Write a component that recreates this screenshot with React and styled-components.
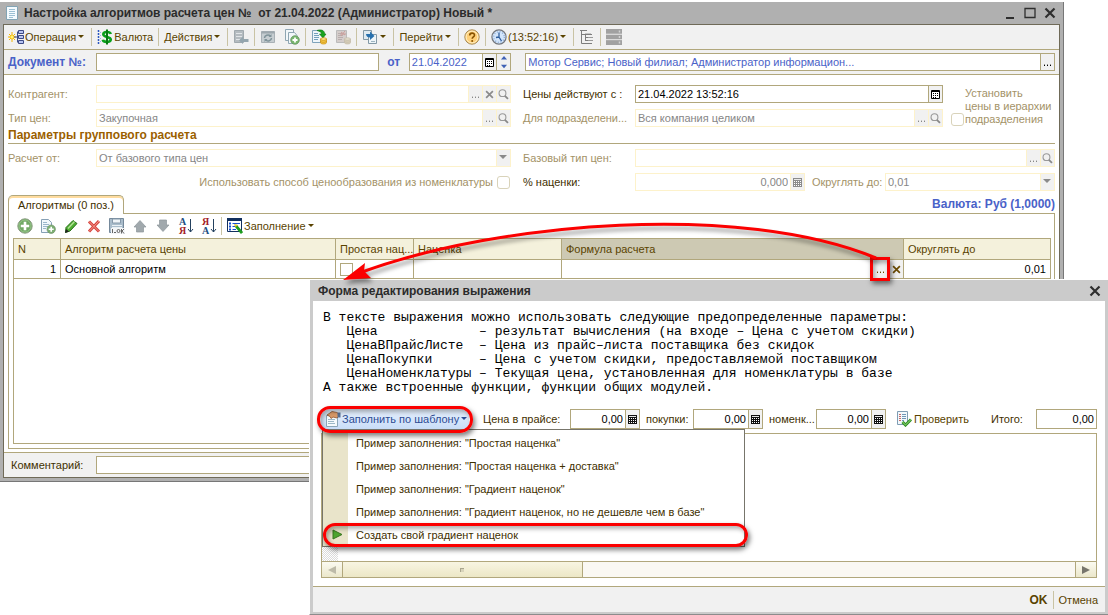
import React from 'react';
import styled, { createGlobalStyle, css } from 'styled-components';

const colors = {
    line: '#b1a77c',
    softLine: '#fdf2cb',
    panel: '#f1f1f1',
    text: '#3f3000',
    dim: '#a39267',
    gray: '#868686',
    blue: '#4a62c8',
    red: '#fb0000',
};

const GlobalStyle = createGlobalStyle`
    * {
        box-sizing: border-box;
    }
    body {
        margin: 0;
        background: #fff;
        color: ${colors.text};
        font-family: 'Liberation Sans', Arial, sans-serif;
        font-size: 11px;
        line-height: 14px;
    }
    button, input, select, textarea {
        font: inherit;
        color: inherit;
        margin: 0;
        padding: 0;
        border: 0;
        border-radius: 0;
        background: none;
        outline: none;
    }
    button {
        cursor: pointer;
    }
    svg {
        flex: none;
    }
`;

const Desktop = styled.div`
    position: relative;
    min-height: 100vh;
    overflow: hidden;
`;

/* ---------- windows ---------- */

const MainWindow = styled.main`
    margin: 2px 44px 0 0;
    padding: 0 3px 3px;
    background: #b0b0b0;
    border-right: 1px solid #777;
    border-bottom: 1px solid #777;
`;

const WindowTitle = styled.header`
    display: flex;
    align-items: center;
    gap: 4px;
    height: 22px;
    padding: 0 2px 0 1px;
`;

const TitleText = styled.h1`
    flex: 1;
    margin: 0;
    font-size: 12px;
    font-weight: bold;
    line-height: 14px;
    color: #2b2b2b;
    white-space: pre;
`;

const WindowButton = styled.button`
    display: flex;
    width: 16px;
    height: 16px;
    align-items: center;
    justify-content: center;
`;

const WindowBody = styled.div`
    border: 1px solid #6f6a58;
    background: #fff;
`;

const DialogWindow = styled.section`
    position: absolute;
    top: 279px;
    left: 309px;
    right: 0;
    padding: 0 3px 2px;
    background: #cbcbcb;
    border-top: 1px solid #fff;
    border-left: 1px solid #fff;
    border-bottom: 1px solid #8c8c8c;
`;

const DialogTitle = styled(WindowTitle)`
    height: 21px;
    padding: 0 2px 0 5px;
`;

const DialogHeading = styled(TitleText).attrs({ as: 'h2' })`
    font-size: 12px;
`;

const DialogBody = styled.div`
    padding: 10px 8px 8px;
    background: #fff;
`;

/* ---------- toolbars ---------- */

const Toolbar = styled.div`
    display: flex;
    align-items: center;
    height: 25px;
    background: ${colors.panel};
    border-bottom: 1px solid ${colors.line};
`;

const ToolButton = styled.button`
    display: flex;
    align-items: center;
    gap: 1px;
    height: 20px;
    padding: 0 4px;
    white-space: nowrap;
    color: #5a4300;
`;

const TableButton = styled(ToolButton)`
    padding: 0 3px 0 4px;
`;

const Separator = styled.span`
    width: 1px;
    height: 18px;
    margin: 0 1px;
    background: #c9c3a4;
`;

const Caret = styled.span`
    margin: 0 2px 2px 1px;
    border: ${({ $big }) => ($big ? 4 : 3)}px solid transparent;
    border-top-color: ${({ $color }) => $color || '#5a4300'};
    border-bottom: 0;
`;

/* ---------- fields ---------- */

const Label = styled.label`
    color: ${({ $tone }) => colors[$tone || 'text']};
    overflow: hidden;
    text-overflow: ellipsis;
    white-space: nowrap;
`;

const FieldBox = styled.div`
    display: flex;
    flex: ${({ $grow }) => $grow || 1};
    min-width: 0;
    height: 18px;
    background: #fff;
    border: 1px solid ${({ $off }) => ($off ? colors.softLine : colors.line)};
    color: ${({ $off }) => ($off ? colors.gray : '#000')};
`;

const fieldText = css`
    flex: 1;
    width: 100%;
    min-width: 0;
    padding: 0 2px;
    text-align: ${({ $right }) => ($right ? 'right' : 'left')};
    color: ${({ $blue }) => ($blue ? colors.blue : 'inherit')};
    text-overflow: ellipsis;
`;

const TextInput = styled.input`
    ${fieldText}
`;

const Select = styled.select`
    ${fieldText}
    appearance: none;
`;

const SelectArrow = styled.span`
    display: flex;
    width: 14px;
    align-items: center;
    justify-content: center;
    background: ${colors.panel};
    border-left: 1px solid ${colors.softLine};
    pointer-events: none;
`;

const FieldButton = styled.button`
    display: flex;
    flex: none;
    width: 14px;
    align-items: center;
    justify-content: center;
    background: ${colors.panel};
    border-left: 1px solid ${({ $off }) => ($off ? colors.softLine : colors.line)};
`;

const Check = styled.input.attrs({ type: 'checkbox' })`
    appearance: none;
    flex: none;
    width: 13px;
    height: 13px;
    background: #fff;
    border: 1px solid ${({ $off }) => ($off ? '#d9d3ba' : colors.line)};
    border-radius: ${({ $off }) => ($off ? 3 : 0)}px;
`;

/* ---------- main form ---------- */

const DocumentRow = styled.div`
    display: flex;
    align-items: center;
    height: 25px;
    padding: 0 4px;
    background: ${colors.panel};
    border-bottom: 1px solid ${colors.line};
`;

const StrongLabel = styled.label`
    flex: none;
    width: ${({ $wide }) => ($wide ? 88 : 30)}px;
    font-size: 12px;
    font-weight: bold;
    color: ${colors.blue};
    text-align: ${({ $wide }) => ($wide ? 'left' : 'center')};
`;

const DateGroup = styled.div`
    display: flex;
    flex: 103;
    min-width: 0;
    margin-right: 14px;
`;

const FormGrid = styled.div`
    display: grid;
    grid-template-columns: 88px minmax(0, 415fr) 124px minmax(0, 308fr) 112px;
    row-gap: 6px;
    align-items: center;
    padding: ${({ $top }) => $top}px 4px 0;
`;

const SideLabel = styled(Label)`
    padding-left: 12px;
`;

const WideCell = styled.div`
    display: flex;
    align-items: center;
    grid-column: span 2;
    min-width: 0;
`;

const HierarchyCheck = styled.label`
    display: flex;
    grid-column: 5;
    grid-row: 1 / span 2;
    align-items: flex-end;
    gap: 1px;
    padding-left: 8px;
    line-height: 13px;
    color: ${colors.dim};
`;

const HierarchyText = styled.span`
    white-space: pre;
`;

const PricingCheck = styled(WideCell).attrs({ as: 'label' })`
    justify-content: flex-end;
    gap: 4px;
    padding-right: 1px;
    color: ${colors.dim};
`;

const RoundLabel = styled(Label)`
    flex: none;
    width: 80px;
    padding-left: 7px;
`;

const SectionTitle = styled.h2`
    margin: 0 4px;
    height: 17px;
    font-size: 12px;
    line-height: 17px;
    color: #9b5f00;
    border-bottom: 1px solid ${colors.line};
`;

const TabStrip = styled.div`
    display: flex;
    justify-content: space-between;
    align-items: flex-end;
    height: 18px;
    margin: 4px 4px 0;
`;

const Tab = styled.button`
    position: relative;
    z-index: 1;
    height: 19px;
    margin-bottom: -1px;
    padding: 0 9px;
    background: #fff;
    border: 1px solid ${colors.line};
    border-bottom: 0;
    border-radius: 5px 5px 0 0;
    box-shadow: inset 0 2px 0 #ffdc9f;
`;

const Currency = styled.strong`
    align-self: center;
    font-size: 12px;
    color: ${colors.blue};
`;

const TabPanel = styled.div`
    margin: 0 4px 3px;
    padding: 0 3px 4px 4px;
    border: 1px solid ${colors.line};
`;

const TableToolbar = styled.div`
    display: flex;
    align-items: center;
    height: 24px;
`;

const TableFrame = styled.div`
    min-height: 206px;
    border: 1px solid ${colors.line};
`;

const Table = styled.table`
    width: 100%;
    table-layout: fixed;
    border-collapse: separate;
    border-spacing: 0;
`;

const Col = styled.col`
    width: ${({ $width }) => $width};
`;

const Th = styled.th`
    height: 21px;
    padding: 0 3px 0 4px;
    font-weight: normal;
    text-align: left;
    white-space: nowrap;
    color: #5a4300;
    background: ${({ $active }) => ($active ? '#cdc9b3' : '#f4f1dc')};
    border-right: 1px solid ${colors.line};
    border-bottom: 1px solid ${colors.line};
    &:last-child {
        border-right: 0;
    }
`;

const Td = styled.td`
    height: 19px;
    padding: ${({ $flush }) => ($flush ? 0 : '0 4px')};
    line-height: 12px;
    color: #000;
    text-align: ${({ $right }) => ($right ? 'right' : 'left')};
    border-right: 1px solid ${colors.line};
    border-bottom: 1px solid ${colors.line};
    &:last-child {
        border-right: 0;
    }
`;

const CheckCell = styled.div`
    display: flex;
    align-items: center;
`;

const CellButtons = styled.div`
    display: flex;
    justify-content: flex-end;
    height: 18px;
`;

const CellButton = styled(FieldButton)`
    position: relative;
    width: 15px;
`;

const redMark = css`
    content: '';
    position: absolute;
    z-index: 3;
    border: 3px solid ${colors.red};
    box-shadow: 2px 3px 5px rgba(0, 0, 0, 0.5), inset 2px 3px 4px rgba(0, 0, 0, 0.3);
    pointer-events: none;
`;

const MarkedCellButton = styled(CellButton)`
    width: 17px;
    &::after {
        ${redMark}
        inset: -3px -2px;
    }
`;

const CommentRow = styled.div`
    display: flex;
    align-items: center;
    height: 25px;
    padding: 0 4px 0 7px;
    background: ${colors.panel};
    border-top: 1px solid ${colors.line};
`;

const CommentLabel = styled(Label)`
    flex: none;
    width: 85px;
`;

/* ---------- expression dialog ---------- */

const Help = styled.pre`
    margin: 0 0 14px;
    padding-left: 2px;
    font-family: 'Liberation Mono', 'Courier New', monospace;
    font-size: 13px;
    line-height: 14px;
    color: #000;
`;

const PriceBar = styled.div`
    display: grid;
    grid-template-columns: 162px 87px 70px 53px 70px 53px 70px minmax(0, 1fr) 73px 61px;
    align-items: center;
    margin-bottom: 4px;
`;

const PriceBox = styled(FieldBox)`
    height: 20px;
`;

const PriceLabel = styled(Label)`
    padding-left: ${({ $inset }) => ($inset ? 6 : 0)}px;
`;

const CheckButton = styled(ToolButton)`
    gap: 2px;
    padding: 0 0 0 10px;
`;

const TotalLabel = styled(Label)`
    padding-left: 28px;
`;

const TemplateMenu = styled.div`
    position: relative;
    justify-self: start;
`;

const TemplateButton = styled.button`
    position: relative;
    display: flex;
    align-items: center;
    gap: 1px;
    height: 20px;
    padding: 0 0 0 4px;
    white-space: nowrap;
    color: #2c4b93;
    background: linear-gradient(#e6f0fd, #c9ddf8);
    &::after {
        ${redMark}
        inset: -3px -4px -4px;
        border-radius: 13px;
    }
`;

const MenuList = styled.ul`
    position: absolute;
    z-index: 2;
    top: 20px;
    left: 1px;
    width: 423px;
    margin: 0;
    padding: 1px 1px 0;
    list-style: none;
    background: linear-gradient(to right, #e9e4ca 25px, #fff 25px);
    border: 1px solid #77756b;
`;

const MenuItem = styled.button`
    position: relative;
    display: flex;
    align-items: center;
    width: 100%;
    height: 23px;
    padding-left: ${({ $marked }) => ($marked ? 8 : 32)}px;
    gap: 13px;
    white-space: nowrap;
    ${({ $marked }) => $marked && css`
        &::after {
            ${redMark}
            inset: 0 -5px -1px -1px;
            border-radius: 12px;
        }
    `}
`;

const Editor = styled.div`
    border: 1px solid ${colors.line};
`;

const EditorArea = styled.div`
    display: grid;
    grid-template-columns: 16px 1fr;
`;

const Gutter = styled.div`
    background: repeating-conic-gradient(#dcdcdc 0 25%, #fff 0 50%) 0 0 / 2px 2px;
`;

const ExpressionText = styled.textarea`
    display: block;
    width: 100%;
    height: 127px;
    resize: none;
    color: #000;
`;

const ScrollBar = styled.div`
    display: flex;
    height: 16px;
    background: #faf8f3;
    border-top: 1px solid ${colors.line};
`;

const ScrollButton = styled.button`
    display: flex;
    width: 21px;
    align-items: center;
    justify-content: center;
    background: linear-gradient(#fbfaf1, #ebe7cb);
    border-${({ $side }) => $side}: 1px solid ${colors.line};
`;

const ScrollThumb = styled.div`
    display: flex;
    width: 31%;
    align-items: center;
    justify-content: center;
    background: linear-gradient(#f8f5e2, #ece7c6);
    border-right: 1px solid ${colors.line};
`;

const Grip = styled.span`
    width: 4px;
    height: 4px;
    border-top: 1px solid #aaa68f;
    border-left: 1px solid #aaa68f;
    background: #d8d4bb;
`;

const ScrollSpace = styled.div`
    flex: 1;
`;

const DialogFooter = styled.footer`
    display: flex;
    align-items: center;
    justify-content: flex-end;
    height: 26px;
    padding-right: 3px;
    background: ${colors.panel};
    border-top: 1px solid ${colors.line};
`;

const OkButton = styled(ToolButton)`
    font-size: 12px;
    font-weight: bold;
`;

const ArrowLayer = styled.svg`
    position: absolute;
    z-index: 4;
    top: 0;
    left: 0;
    width: 1108px;
    height: 300px;
    pointer-events: none;
    filter: drop-shadow(2px 4px 2px rgba(0, 0, 0, 0.4));
`;

/* ---------- icons ---------- */

const Icon = ({ size = 16, children }) => (
    <svg width={size} height={size} viewBox="0 0 16 16" fill="none" aria-hidden="true">
        {children}
    </svg>
);

const CloseIcon = () => (
    <Icon><path d="M3.5 3.5l9 9M12.5 3.5l-9 9" stroke="#2e2e2e" strokeWidth="2.2" /></Icon>
);

const DocIcon = () => (
    <Icon>
        <path d="M2.5 1.5h11v13h-11z" fill="#f5fbff" stroke="#82a4b5" />
        <path d="M5 4.5h6M5 6.5h6M5 8.5h6M5 10.5h6M5 12.5h4" stroke="#9cc0d4" />
    </Icon>
);

const OperationIcon = () => (
    <Icon>
        <path d="M4 3v10M0 8h8M1 5l6 6M7 5l-6 6" stroke="#f3b400" />
        <circle cx="4" cy="8" r="2" fill="#fff27a" stroke="#f0b400" strokeWidth=".7" />
        <path d="M6 8h3M9.5 3v10M9 3h2M9 8h2M9 13h2" stroke="#3c4a86" />
        <path d="M10.5 1.5h5v3h-5zM10.5 6.5h5v3h-5zM10.5 11.5h5v3h-5z" fill="#b8c4f2" stroke="#3c4a86" />
    </Icon>
);

const DollarIcon = () => (
    <Icon>
        <path d="M1.5 1v14" stroke="#2b57c0" strokeWidth="1.5" strokeDasharray="2 1" />
        <path d="M3.5 3v10" stroke="#96b2e8" strokeDasharray="1 2" />
        <path d="M13.8 5C13 2.3 6.3 2.2 6.3 5.3c0 3.2 7.5 2 7.5 5.2 0 3.3-7.5 3-8 .2" stroke="#0aa01c" strokeWidth="2.6" />
        <path d="M10 .5v15" stroke="#067a12" strokeWidth="2" />
    </Icon>
);

const PostIcon = () => (
    <Icon>
        <path d="M1.5 1.5h9v12h-9z" fill="#b4bbc0" stroke="#a0a9ae" />
        <path d="M3 4.5h6M3 7.5h6M3 10.5h4" stroke="#e1e5e8" />
        <path d="M6 11.5l4-4V10h5.5v3H10v2z" fill="#94a5ae" />
    </Icon>
);

const RefreshIcon = () => (
    <Icon>
        <path d="M1.5 2.5h13v11h-13z" fill="#c6cdd1" stroke="#a8b0b5" />
        <path d="M1.5 3.5h13" stroke="#9da7ad" strokeWidth="2" />
        <path d="M4.5 9a3.5 3 0 016-2M11.5 9a3.5 3 0 01-6 2" stroke="#7f9299" strokeWidth="1.5" />
        <path d="M11.5 5v3h-3zM4.5 13v-3h3z" fill="#7f9299" />
    </Icon>
);

const CopyAddIcon = () => (
    <Icon>
        <path d="M1.5.5h8v11h-8z" fill="#f2f7fa" stroke="#8fa6b3" />
        <path d="M4.5 3.5h6l2.5 3v8h-8.500z" fill="#f2f7fa" stroke="#8fa6b3" />
        <circle cx="11" cy="11" r="4.3" fill="#79b66f" stroke="#5b8d56" strokeWidth=".7" />
        <path d="M11 8.5v5M8.5 11h5" stroke="#fff" strokeWidth="1.8" />
    </Icon>
);

const CoinsIcon = ({ off }) => (
    <Icon>
        <path d="M1.5 1.5h10v12h-10z" fill={off ? '#d4cdcb' : '#eef5fa'} stroke={off ? '#bbb' : '#7fa3ba'} />
        <path d="M3 4.5h4M3 6.5h5M3 8.5h5M3 10.5h4" stroke={off ? '#b9aeae' : '#73a0bd'} />
        {off
            ? <path d="M6 3l4 3M10 2L6 7M5 5h6" stroke="#ca9f9c" />
            : <path d="M6 1.5c4-1.5 8 0 7.5 3.5H15l-3 4-3.5-4h2C10.5 3 9 2.5 6 1.5z" fill="#17a41e" stroke="#08740e" strokeWidth=".6" />}
        <path d="M9.5 10v3.5c0 2 6 2 6 0V10z" fill={off ? '#d6cdb8' : '#f6c945'} stroke={off ? '#c3bca9' : '#c48a10'} strokeWidth=".7" />
        <ellipse cx="12.5" cy="10" rx="3" ry="1.3" fill={off ? '#e2dccb' : '#ffe88b'} stroke={off ? '#c3bca9' : '#c48a10'} strokeWidth=".7" />
        <path d="M9.5 12c0 1.7 6 1.7 6 0" stroke={off ? '#c3bca9' : '#c48a10'} strokeWidth=".7" />
    </Icon>
);

const BasedOnIcon = () => (
    <Icon>
        <path d="M1.5 1.5h8v9h-8z" fill="#dfeaf1" stroke="#8298a6" />
        <path d="M6.5 5.5h8v9h-8z" fill="#eef5f9" stroke="#8298a6" />
        <path d="M9 12.5h4" stroke="#9db4c1" />
        <path d="M4 5h4V2.5L12.5 7 8 11V8.5C6 8.5 4 7.5 4 5z" fill="#2770ae" />
    </Icon>
);

const HelpIcon = () => (
    <Icon>
        <circle cx="8" cy="8" r="7.2" fill="#ffd078" stroke="#a58a58" />
        <circle cx="8" cy="8" r="5.9" stroke="#fff0c9" strokeWidth=".9" />
        <path d="M5.7 6.5C5.7 3.3 10.6 3.5 10.5 6.2 10.4 8 8.2 7.9 8.2 9.8" stroke="#885300" strokeWidth="1.6" />
        <circle cx="8.2" cy="12" r="1" fill="#885300" />
    </Icon>
);

const ClockIcon = () => (
    <Icon>
        <circle cx="8" cy="8" r="7.1" fill="#d3e5fa" stroke="#73767c" strokeWidth="1.2" />
        <circle cx="8" cy="8" r="5.3" stroke="#88a9d4" strokeWidth="1.3" strokeDasharray="1 1.77" />
        <path d="M8 3.5V8l2.5 4M8 8l-3 .5" stroke="#2f5e9e" strokeWidth="1.3" />
    </Icon>
);

const TreeIcon = () => (
    <Icon>
        <path d="M1 1.5h7M2.5 2v12.5H5M2.5 5.5H6M6 5.5h7M6.5 6v6M7 8.5h2M7 11.5h2M5 14.5h8" stroke="#7d7d7d" />
        <path d="M9 8.5h5M9 11.5h5" stroke="#9a9a9a" />
        <path d="M6 4.5h6" stroke="#c4c4c4" />
    </Icon>
);

const ServerIcon = () => (
    <Icon>
        <path d="M0 0h16v5H0zM0 5.5h16v5H0zM0 11h16v5H0z" fill="#a1a1a1" />
        <path d="M0 5.2h16M0 10.7h16" stroke="#e0e0e0" />
        <path d="M13.5 1.5v2M13.5 7v2M13.5 12.5v2" stroke="#d3d3d3" strokeWidth="1.5" />
    </Icon>
);

const CalendarIcon = () => (
    <svg width="9" height="9" viewBox="0 0 9 9" fill="none" aria-hidden="true">
        <path d="M.5.5h8v8h-8z" fill="#fff" stroke="#000" />
        <path d="M0 1.5h9" stroke="#000" />
        <path d="M2 3.5h6M2 5.5h6M2 7.5h4" stroke="#000" strokeDasharray="1 1" />
    </svg>
);

const CalcIcon = ({ color = '#111' }) => (
    <svg width="9" height="9" viewBox="0 0 9 9" fill="none" aria-hidden="true">
        <path d="M0 0h9v9H0z" fill={color} />
        <path d="M1 1.5h7" stroke="#e8e8e8" />
        <path d="M1 3.5h7M1 5.5h7M1 7.5h7" stroke="#fff" strokeDasharray="1 1" />
    </svg>
);

const SearchIcon = () => (
    <Icon size={11}>
        <circle cx="6.5" cy="6" r="5" stroke="#999" strokeWidth="1.6" />
        <path d="M10 10l4.5 4.5" stroke="#888" strokeWidth="2.6" />
    </Icon>
);

const DotsIcon = ({ color = '#000' }) => (
    <svg width="9" height="9" viewBox="0 0 9 9" fill="none" aria-hidden="true">
        <path d="M1 7.5h1M4 7.5h1M7 7.5h1" stroke={color} />
        <path d="M1 6.5h1M4 6.5h1M7 6.5h1" stroke={color} opacity=".4" />
    </svg>
);

const CrossIcon = ({ color = '#8a8a8a' }) => (
    <Icon size={9}><path d="M2 2l12 12M14 2L2 14" stroke={color} strokeWidth="3" /></Icon>
);

const SpinIcon = () => (
    <Icon size={14}><path d="M8 1l3.5 4h-7zM8 15l3.5-4h-7z" fill="#3f61b5" /></Icon>
);

const AddIcon = () => (
    <Icon>
        <circle cx="8" cy="8" r="7.2" fill="#72a966" stroke="#8b9b82" />
        <circle cx="8" cy="8" r="6" stroke="#9bc98d" strokeWidth=".8" />
        <path d="M8 3.8v8.4M3.8 8h8.4" stroke="#fff" strokeWidth="2.6" />
    </Icon>
);

const AddCopyIcon = () => (
    <Icon>
        <path d="M1.5 1.5h7l3 3v10h-10z" fill="#f3f8fc" stroke="#87a0b5" />
        <path d="M3 4.5h4M3 6.5h6M3 8.5h5M3 10.5h3" stroke="#9bb6cb" />
        <circle cx="11.2" cy="11.2" r="4.2" fill="#7caf72" stroke="#71906a" strokeWidth=".7" />
        <path d="M11.2 8.7v5M8.7 11.2h5" stroke="#fff" strokeWidth="1.6" />
    </Icon>
);

const PencilIcon = () => (
    <Icon>
        <path d="M3 9.5L10 2.5l4 3-7 7.5-4.5 1.5z" fill="#4fae32" stroke="#28701a" />
        <path d="M5 10.5l6.5-7" stroke="#b6e39a" strokeWidth="1.3" />
        <path d="M2 15l1-4 3 2.5z" fill="#222" />
    </Icon>
);

const DeleteIcon = () => (
    <Icon>
        <path d="M3 3.5l10 10M13 3L3 13.5" stroke="#d6433d" strokeWidth="3" />
        <path d="M3 3.5l10 10M13 3L3 13.5" stroke="#f59a8f" strokeWidth="1" />
    </Icon>
);

const SaveIcon = () => (
    <Icon>
        <path d="M.5.5h14v14H.5z" fill="#a9bccb" stroke="#75899b" />
        <path d="M3.5 1h8v4h-8z" fill="#eff4f8" stroke="#8699aa" />
        <path d="M3 7.5h10M3 9.5h10" stroke="#e9f0f5" />
        <path d="M2 10h14v6H2z" fill="#f4f6f8" />
        <path d="M3.5 11v4M5 14.5h2" stroke="#666" />
        <circle cx="9.5" cy="13" r="1.5" stroke="#666" />
        <path d="M12.5 11v4.5M15 11l-2 2 2 2.5" stroke="#666" />
    </Icon>
);

const MoveIcon = ({ down }) => (
    <Icon>
        <path
            d={down ? 'M4.5 2h7v5H14l-6 6.5L2 7h2.5z' : 'M4.5 14h7V9H14L8 2.5 2 9h2.5z'}
            fill="#a1a9ad"
            stroke="#8d969b"
            strokeWidth=".7"
        />
    </Icon>
);

const SortGrid = styled.span`
    display: grid;
    grid-template-columns: 9px 7px;
    align-items: center;
`;

const SortLetters = styled.span`
    display: flex;
    flex-direction: column;
    font-family: 'Liberation Serif', serif;
    font-size: 10px;
    font-weight: bold;
    line-height: 9px;
`;

const Letter = styled.span`
    color: ${({ $red }) => ($red ? '#a32026' : '#1d4e82')};
`;

const SortGlyph = ({ reverse }) => (
    <SortGrid>
        <SortLetters>
            <Letter $red={reverse}>{reverse ? 'Я' : 'А'}</Letter>
            <Letter $red={!reverse}>{reverse ? 'А' : 'Я'}</Letter>
        </SortLetters>
        <svg width="7" height="14" viewBox="0 0 7 14" fill="none" aria-hidden="true">
            <path d="M3.5 0v13M1 10l2.5 3L6 10" stroke="#24415f" />
        </svg>
    </SortGrid>
);

const FillIcon = () => (
    <Icon>
        <path d="M.5.5h14v13H.5z" fill="#fff" stroke="#12305e" />
        <path d="M0 1.5h15" stroke="#12305e" strokeWidth="3" />
        <path d="M2 5.5h2M2 8.5h2M2 11.5h2" stroke="#1850d0" strokeWidth="2" />
        <path d="M5.5 5.5H13M5.5 8.5H9M5.5 11.5H9" stroke="#1850d0" />
        <path d="M9 8l6 7" stroke="#1d9c1f" strokeWidth="2.8" />
        <path d="M7.5 6.5l3 .5-2 2z" fill="#ffe538" stroke="#c6a000" strokeWidth=".5" />
    </Icon>
);

const HandIcon = () => (
    <Icon>
        <path d="M1.5 4.5h11v11h-11z" fill="#f5fafc" stroke="#8ba7b8" />
        <path d="M3 8.5h7M3 10.5h6M3 12.5h7" stroke="#9cb8c7" />
        <path d="M2 4l5-3.5 5 1L15 4l-3 3-4-1-2 1.5L5 5.5z" fill="#d99a68" stroke="#8f552d" strokeWidth=".8" />
        <path d="M12.5 1.5h3v5h-3z" fill="#566f92" />
    </Icon>
);

const VerifyIcon = () => (
    <Icon>
        <path d="M1.5.5h10v13h-10z" fill="#f2f8fc" stroke="#7f9db4" />
        <path d="M3 3.5h2M3 5.5h2M3 7.5h2M3 9.5h2" stroke="#cc6662" />
        <path d="M6 3.5h4M6 5.5h4M6 7.5h4M6 9.5h2" stroke="#6f97b8" />
        <path d="M6.5 11l3 3 5.5-5.5" stroke="#2b8a22" strokeWidth="3" />
        <path d="M6.5 11l3 3 5.5-5.5" stroke="#73c15a" strokeWidth="1.2" />
    </Icon>
);

const PlayIcon = () => (
    <svg width="11" height="11" viewBox="0 0 11 11" aria-hidden="true">
        <path d="M1 1l9 4.5L1 10z" fill="#4ea52f" stroke="#39761f" />
    </svg>
);

const ScrollArrow = ({ left }) => (
    <svg width="8" height="8" viewBox="0 0 8 8" aria-hidden="true">
        <path d={left ? 'M8 0v8L0 4z' : 'M0 0v8l8-4z'} fill={left ? '#bdbaa8' : '#77756b'} />
    </svg>
);

/* ---------- parts ---------- */

const fieldIcons = {
    dots: <DotsIcon color="#888" />,
    clear: <CrossIcon />,
    search: <SearchIcon />,
    calendar: <CalendarIcon />,
    calc: <CalcIcon />,
    calcOff: <CalcIcon color="#8b8b8b" />,
    more: <DotsIcon />,
    spin: <SpinIcon />,
};

const fieldTitles = {
    dots: 'Выбрать',
    clear: 'Очистить',
    search: 'Открыть',
    calendar: 'Календарь',
    calc: 'Калькулятор',
    calcOff: 'Калькулятор',
    more: 'Выбрать',
    spin: 'Изменить',
};

const Field = ({ id, value = '', off, right, blue, grow, label, buttons = [] }) => (
    <FieldBox $off={off} $grow={grow}>
        <TextInput id={id} defaultValue={value} readOnly={off} aria-label={label} $right={right} $blue={blue} />
        {buttons.map((name) => (
            <FieldButton key={name} type="button" $off={off} aria-label={fieldTitles[name]}>
                {fieldIcons[name]}
            </FieldButton>
        ))}
    </FieldBox>
);

const SelectField = ({ id, value }) => (
    <FieldBox $off>
        <Select id={id} defaultValue={value}>
            <option>{value}</option>
        </Select>
        <SelectArrow><Caret $big $color="#8a8a8a" /></SelectArrow>
    </FieldBox>
);

const PriceField = ({ id }) => (
    <PriceBox>
        <TextInput id={id} defaultValue="0,00" $right />
        <FieldButton type="button" aria-label="Калькулятор"><CalcIcon /></FieldButton>
    </PriceBox>
);

const MainToolbar = () => (
    <Toolbar>
        <ToolButton><OperationIcon />Операция<Caret /></ToolButton>
        <Separator />
        <ToolButton><DollarIcon />Валюта</ToolButton>
        <Separator />
        <ToolButton>Действия<Caret /></ToolButton>
        <Separator />
        <ToolButton aria-label="Провести"><PostIcon /></ToolButton>
        <Separator />
        <ToolButton aria-label="Обновить"><RefreshIcon /></ToolButton>
        <ToolButton aria-label="Скопировать"><CopyAddIcon /></ToolButton>
        <Separator />
        <ToolButton aria-label="Движения"><CoinsIcon /></ToolButton>
        <ToolButton aria-label="Отменить движения"><CoinsIcon off /></ToolButton>
        <Separator />
        <ToolButton aria-label="Ввести на основании"><BasedOnIcon /><Caret /></ToolButton>
        <Separator />
        <ToolButton>Перейти<Caret /></ToolButton>
        <Separator />
        <ToolButton aria-label="Справка"><HelpIcon /></ToolButton>
        <Separator />
        <ToolButton><ClockIcon />(13:52:16)<Caret /></ToolButton>
        <Separator />
        <ToolButton aria-label="Структура"><TreeIcon /></ToolButton>
        <Separator />
        <ToolButton aria-label="Сервер"><ServerIcon /></ToolButton>
    </Toolbar>
);

const AlgorithmTable = () => (
    <TableFrame>
        <Table>
            <colgroup>
                <Col $width="47px" />
                <Col $width="275px" />
                <Col $width="78px" />
                <Col $width="148px" />
                <Col $width="342px" />
                <Col />
            </colgroup>
            <thead>
                <tr>
                    <Th>N</Th>
                    <Th>Алгоритм расчета цены</Th>
                    <Th>Простая нац...</Th>
                    <Th>Наценка</Th>
                    <Th $active>Формула расчета</Th>
                    <Th>Округлять до</Th>
                </tr>
            </thead>
            <tbody>
                <tr>
                    <Td $right>1</Td>
                    <Td>Основной алгоритм</Td>
                    <Td><CheckCell><Check aria-label="Простая наценка" /></CheckCell></Td>
                    <Td />
                    <Td $flush>
                        <CellButtons>
                            <MarkedCellButton type="button" aria-label="Изменить формулу">
                                <DotsIcon color="#6b4a00" />
                            </MarkedCellButton>
                            <CellButton type="button" aria-label="Очистить">
                                <CrossIcon color="#6b4a00" />
                            </CellButton>
                        </CellButtons>
                    </Td>
                    <Td $right>0,01</Td>
                </tr>
            </tbody>
        </Table>
    </TableFrame>
);

const PriceSettings = () => (
    <MainWindow>
        <WindowTitle>
            <DocIcon />
            <TitleText>Настройка алгоритмов расчета цен №  от 21.04.2022 (Администратор) Новый *</TitleText>
            <WindowButton aria-label="Свернуть">
                <Icon><path d="M4 13h8" stroke="#2e2e2e" strokeWidth="2" /></Icon>
            </WindowButton>
            <WindowButton aria-label="Развернуть">
                <Icon><path d="M3 3.5h10v9H3z" stroke="#2e2e2e" strokeWidth="1.3" /></Icon>
            </WindowButton>
            <WindowButton aria-label="Закрыть"><CloseIcon /></WindowButton>
        </WindowTitle>
        <WindowBody>
            <MainToolbar />
            <DocumentRow>
                <StrongLabel htmlFor="number" $wide>Документ №:</StrongLabel>
                <Field id="number" grow={282} />
                <StrongLabel htmlFor="date">от</StrongLabel>
                <DateGroup>
                    <Field id="date" value="21.04.2022" blue buttons={['calendar', 'spin']} />
                </DateGroup>
                <Field
                    label="Реквизиты"
                    grow={530}
                    value="Мотор Сервис; Новый филиал; Администратор информацион..."
                    blue
                    buttons={['more']}
                />
            </DocumentRow>
            <FormGrid $top={10}>
                <Label $tone="dim" htmlFor="partner">Контрагент:</Label>
                <Field id="partner" off buttons={['dots', 'clear', 'search']} />
                <SideLabel htmlFor="since">Цены действуют с :</SideLabel>
                <Field id="since" value="21.04.2022 13:52:16" buttons={['calendar']} />
                <HierarchyCheck>
                    <Check $off />
                    <HierarchyText>{'Установить\nцены в иерархии\nподразделения'}</HierarchyText>
                </HierarchyCheck>
                <Label $tone="dim" htmlFor="type">Тип цен:</Label>
                <Field id="type" value="Закупочная" off buttons={['dots', 'search']} />
                <SideLabel $tone="dim" htmlFor="unit">Для подразделени...</SideLabel>
                <Field id="unit" value="Вся компания целиком" off buttons={['dots', 'search']} />
            </FormGrid>
            <SectionTitle>Параметры группового расчета</SectionTitle>
            <FormGrid $top={5}>
                <Label $tone="dim" htmlFor="from">Расчет от:</Label>
                <SelectField id="from" value="От базового типа цен" />
                <SideLabel $tone="dim" htmlFor="base">Базовый тип цен:</SideLabel>
                <WideCell><Field id="base" off buttons={['dots', 'search']} /></WideCell>
                <PricingCheck>
                    Использовать способ ценообразования из номенклатуры
                    <Check $off />
                </PricingCheck>
                <SideLabel htmlFor="percent">% наценки:</SideLabel>
                <WideCell>
                    <Field id="percent" value="0,000" off right buttons={['calcOff']} />
                    <RoundLabel $tone="dim" htmlFor="round">Округлять до:</RoundLabel>
                    <SelectField id="round" value="0,01" />
                </WideCell>
            </FormGrid>
            <TabStrip>
                <Tab>Алгоритмы (0 поз.)</Tab>
                <Currency>Валюта: Руб (1,0000)</Currency>
            </TabStrip>
            <TabPanel>
                <TableToolbar>
                    <TableButton aria-label="Добавить"><AddIcon /></TableButton>
                    <TableButton aria-label="Добавить копированием"><AddCopyIcon /></TableButton>
                    <TableButton aria-label="Изменить"><PencilIcon /></TableButton>
                    <TableButton aria-label="Удалить"><DeleteIcon /></TableButton>
                    <TableButton aria-label="Закончить редактирование"><SaveIcon /></TableButton>
                    <TableButton aria-label="Вверх"><MoveIcon /></TableButton>
                    <TableButton aria-label="Вниз"><MoveIcon down /></TableButton>
                    <TableButton aria-label="По возрастанию"><SortGlyph /></TableButton>
                    <TableButton aria-label="По убыванию"><SortGlyph reverse /></TableButton>
                    <Separator />
                    <ToolButton><FillIcon />Заполнение<Caret /></ToolButton>
                </TableToolbar>
                <AlgorithmTable />
            </TabPanel>
            <CommentRow>
                <CommentLabel htmlFor="comment">Комментарий:</CommentLabel>
                <Field id="comment" />
            </CommentRow>
        </WindowBody>
    </MainWindow>
);

const helpText = `В тексте выражения можно использовать следующие предопределенные параметры:
   Цена             – результат вычисления (на входе – Цена с учетом скидки)
   ЦенаВПрайсЛисте  – Цена из прайс–листа поставщика без скидок
   ЦенаПокупки      – Цена с учетом скидки, предоставляемой поставщиком
   ЦенаНоменклатуры – Текущая цена, установленная для номенклатуры в базе
А также встроенные функции, функции общих модулей.`;

const templates = [
    'Пример заполнения: "Простая наценка"',
    'Пример заполнения: "Простая наценка + доставка"',
    'Пример заполнения: "Градиент наценок"',
    'Пример заполнения: "Градиент наценок, но не дешевле чем в базе"',
];

const ExpressionDialog = () => (
    <DialogWindow role="dialog" aria-label="Форма редактирования выражения">
        <DialogTitle>
            <DialogHeading>Форма редактирования выражения</DialogHeading>
            <WindowButton aria-label="Закрыть"><CloseIcon /></WindowButton>
        </DialogTitle>
        <DialogBody>
            <Help>{helpText}</Help>
            <PriceBar>
                <TemplateMenu>
                    <TemplateButton type="button">
                        <HandIcon />Заполнить по шаблону<Caret $color="#2c4b93" />
                    </TemplateButton>
                    <MenuList>
                        {templates.map((text) => (
                            <li key={text}><MenuItem type="button">{text}</MenuItem></li>
                        ))}
                        <li>
                            <MenuItem type="button" $marked><PlayIcon />Создать свой градиент наценок</MenuItem>
                        </li>
                    </MenuList>
                </TemplateMenu>
                <PriceLabel htmlFor="listPrice">Цена в прайсе:</PriceLabel>
                <PriceField id="listPrice" />
                <PriceLabel htmlFor="buyPrice" $inset>покупки:</PriceLabel>
                <PriceField id="buyPrice" />
                <PriceLabel htmlFor="itemPrice" $inset>номенк...</PriceLabel>
                <PriceField id="itemPrice" />
                <CheckButton type="button"><VerifyIcon />Проверить</CheckButton>
                <TotalLabel htmlFor="total">Итого:</TotalLabel>
                <PriceBox><TextInput id="total" defaultValue="0,00" $right /></PriceBox>
            </PriceBar>
            <Editor>
                <EditorArea>
                    <Gutter />
                    <ExpressionText aria-label="Выражение" />
                </EditorArea>
                <ScrollBar>
                    <ScrollButton $side="right" aria-label="Влево"><ScrollArrow left /></ScrollButton>
                    <ScrollThumb><Grip /></ScrollThumb>
                    <ScrollSpace />
                    <ScrollButton $side="left" aria-label="Вправо"><ScrollArrow /></ScrollButton>
                </ScrollBar>
            </Editor>
        </DialogBody>
        <DialogFooter>
            <OkButton type="button">OK</OkButton>
            <Separator />
            <ToolButton type="button">Отмена</ToolButton>
        </DialogFooter>
    </DialogWindow>
);

const App = () => (
    <>
        <GlobalStyle />
        <Desktop>
            <PriceSettings />
            <ExpressionDialog />
            <ArrowLayer viewBox="0 0 1108 300" fill="none" aria-hidden="true">
                <path d="M362 272C500 222 740 202 876 258" stroke={colors.red} strokeWidth="3" />
                <path d="M343 280l22-17-1 8 7 7z" fill={colors.red} />
            </ArrowLayer>
        </Desktop>
    </>
);

export default App;
